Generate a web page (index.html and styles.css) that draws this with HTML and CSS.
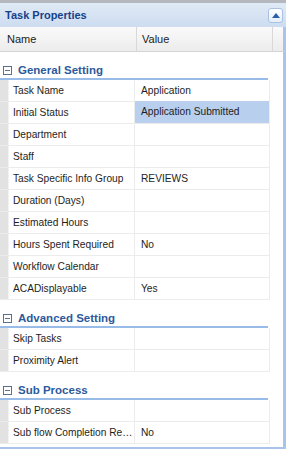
FILE: index.html
```html
<!DOCTYPE html>
<html lang="en">
<head>
    <meta charset="UTF-8">
    <title>Task Properties</title>
    <link rel="stylesheet" href="styles.css">
</head>
<body>
<div class="panel">
    <div class="panel-header">
        <span class="title">Task Properties</span>
        <span class="collapse">
            <svg width="8" height="5" viewBox="0 0 8 5"><path d="M0 5 L4 0 L8 5 Z" fill="#2d5fa8"/></svg>
        </span>
    </div>
    <div class="col-header">
        <div class="col">Name</div>
        <div class="col">Value</div>
        <div class="col-spare"></div>
    </div>
    <div class="grid">
        <div class="group">
            <span class="toggle"></span>General Setting
        </div>
        <div class="row"><div class="name">Task Name</div><div class="value">Application</div></div>
        <div class="row"><div class="name">Initial Status</div><div class="value selected">Application Submitted</div></div>
        <div class="row"><div class="name">Department</div><div class="value"></div></div>
        <div class="row"><div class="name">Staff</div><div class="value"></div></div>
        <div class="row"><div class="name">Task Specific Info Group</div><div class="value">REVIEWS</div></div>
        <div class="row"><div class="name">Duration (Days)</div><div class="value"></div></div>
        <div class="row"><div class="name">Estimated Hours</div><div class="value"></div></div>
        <div class="row"><div class="name">Hours Spent Required</div><div class="value">No</div></div>
        <div class="row"><div class="name">Workflow Calendar</div><div class="value"></div></div>
        <div class="row"><div class="name">ACADisplayable</div><div class="value">Yes</div></div>

        <div class="group">
            <span class="toggle"></span>Advanced Setting
        </div>
        <div class="row"><div class="name">Skip Tasks</div><div class="value"></div></div>
        <div class="row"><div class="name">Proximity Alert</div><div class="value"></div></div>

        <div class="group">
            <span class="toggle"></span>Sub Process
        </div>
        <div class="row"><div class="name">Sub Process</div><div class="value"></div></div>
        <div class="row"><div class="name">Sub flow Completion Required</div><div class="value">No</div></div>
    </div>
</div>
</body>
</html>
```

FILE: styles.css
```css
body {
    margin: 0;
    background: #fff;
    font-family: "Liberation Sans", Arial, sans-serif;
}

.panel {
    width: 286px;
}

.panel-header {
    height: 24px;
    border-top: 3px solid #b4b7bb;
    background: linear-gradient(#e0eaf6, #cddcf0);
    display: flex;
    align-items: center;
    justify-content: space-between;
    padding: 0 3px 0 5px;
}

.title {
    font-size: 11px;
    font-weight: bold;
    color: #15428b;
}

.collapse {
    width: 13px;
    height: 13px;
    background: linear-gradient(#ffffff, #e6eef9);
    border: 1px solid #a9c2e4;
    border-radius: 3px;
    display: flex;
    align-items: center;
    justify-content: center;
}

.col-header {
    display: grid;
    grid-template-columns: 137px 136px 1fr;
    height: 25px;
    background: linear-gradient(#fafafa, #ececec);
    border-bottom: 1px solid #d4d4d4;
    border-right: 3px solid #a9c4ea;
    box-sizing: border-box;
    font-size: 11px;
    color: #222;
}

.col {
    display: flex;
    align-items: center;
    padding-left: 7px;
    border-right: 1px solid #d8d8d8;
}

.col + .col {
    padding-left: 5px;
}

.grid {
    border-right: 3px solid #a9c4ea;
    border-bottom: 3px solid #a9c4ea;
    padding: 0 13px 3px 0;
    font-size: 10.2px;
    color: #1e1e1e;
}

.group {
    height: 28px;
    box-sizing: border-box;
    padding: 12px 0 0 1px;
    border-bottom: 2px solid #99bbe8;
    margin-right: 2px;
    font-size: 11.5px;
    font-weight: bold;
    color: #2c5a9c;
    display: flex;
    align-items: flex-start;
}

.toggle {
    width: 7px;
    height: 7px;
    border: 1px solid #5c6f8a;
    margin: 2px 6px 0 2px;
    position: relative;
    flex: none;
}

.toggle::after {
    content: "";
    position: absolute;
    left: 1px;
    right: 1px;
    top: 3px;
    height: 1px;
    background: #5c6f8a;
}

.row {
    display: grid;
    grid-template-columns: 135px 135px;
    height: 22px;
    border-bottom: 1px solid #ececec;
    box-sizing: border-box;
}

.name {
    border-left: 8px solid #e2e2e2;
    padding-left: 5px;
    border-right: 1px solid #ececec;
    line-height: 21px;
    white-space: nowrap;
    overflow: hidden;
    text-overflow: ellipsis;
    min-width: 0;
    box-shadow: inset 1px 0 0 #f2f2f2;
}

.value {
    padding-left: 6px;
    line-height: 21px;
    border-right: 1px solid #ececec;
    white-space: nowrap;
}

.selected {
    background: #b8cfee;
    margin-top: -1px;
    line-height: 22px;
}
```
